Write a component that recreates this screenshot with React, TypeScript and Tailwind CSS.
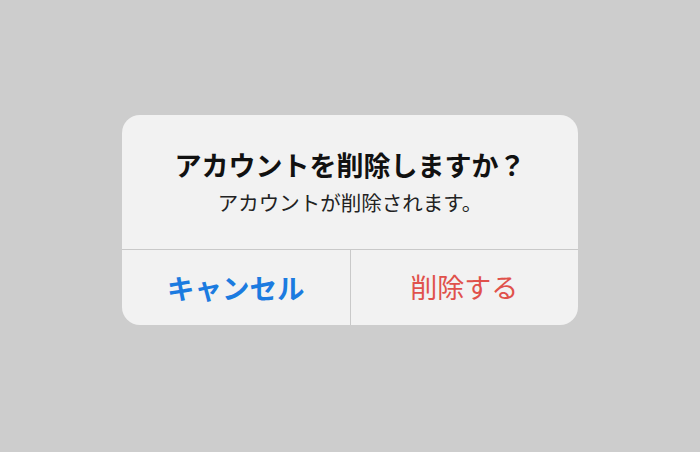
export default function App() {
  const font = { fontFamily: '"Noto Sans CJK JP", "Noto Sans", sans-serif' };
  return (
    <div className="w-[700px] h-[452px] bg-[#cdcdcd] flex justify-center pt-[115px]" style={font}>
      <div className="w-[456px] h-[210px] bg-[#f2f2f2] rounded-[18px] flex flex-col overflow-hidden">
        <div className="h-[135px] flex flex-col items-center pt-[31px] border-b border-[#c9c9c9]">
          <div className="text-[27px] leading-[38px] font-bold text-[#111]">アカウントを削除しますか？</div>
          <div className="text-[20.5px] leading-[28px] mt-[4px] text-[#222]">アカウントが削除されます。</div>
        </div>
        <div className="flex-1 flex">
          <button className="flex-1 flex items-center justify-center text-[27.5px] font-bold text-[#1b7be0] border-r border-[#c9c9c9]">
            キャンセル
          </button>
          <button className="flex-1 flex items-center justify-center text-[27px] text-[#e0514b]">
            削除する
          </button>
        </div>
      </div>
    </div>
  );
}
